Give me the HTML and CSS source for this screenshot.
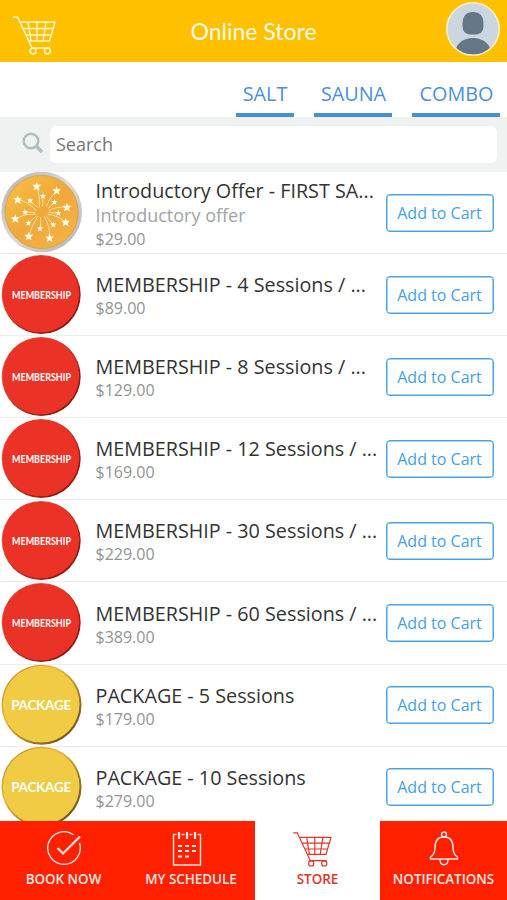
FILE: index.html
```html
<!DOCTYPE html>
<html lang="en">
<head>
<meta charset="utf-8">
<meta name="viewport" content="width=device-width, initial-scale=1">
<title>Online Store</title>
<link rel="stylesheet" href="styles.css">
</head>
<body>
<svg class="defs" width="0" height="0" aria-hidden="true">
  <defs>
    <linearGradient id="redEdge" x1="0" y1="0" x2="1" y2="1"><stop offset=".3" stop-color="#e0503a"/><stop offset=".8" stop-color="#8e1710"/></linearGradient>
    <linearGradient id="goldEdge" x1="0" y1="0" x2="1" y2="1"><stop offset="0" stop-color="#a87c24"/><stop offset=".35" stop-color="#e5b73c"/><stop offset=".85" stop-color="#75571b"/></linearGradient>
    <linearGradient id="orange" x1="0" y1="0" x2="1" y2="1"><stop offset="0" stop-color="#f8c143"/><stop offset=".5" stop-color="#efa83c"/><stop offset="1" stop-color="#f5b640"/></linearGradient>
    <linearGradient id="silver" x1="0" y1="0" x2="1" y2="1"><stop offset="0" stop-color="#b5b2ad"/><stop offset=".5" stop-color="#dedbd6"/><stop offset="1" stop-color="#b2afad"/></linearGradient>
    <path id="star" d="M0-13 3.500-4.500 13-4.500 6 2.500 9 12 0 7-9 12-6 2.500-13-4.500-3.500-4.500Z"/>
    <symbol id="cart" viewBox="0 0 46 40">
      <path d="M1 2H5.500L20 33H38M7.500 7H43L37.500 26H16.500M10.500 13.500H41M13.500 20H39M16 7 19 26M25 7V26M34 7 31 26"/>
      <circle cx="21" cy="36" r="2.900"/><circle cx="35.500" cy="36" r="2.900"/>
    </symbol>
    <symbol id="member" viewBox="0 0 82 82">
      <circle cx="41.200" cy="40.500" r="39.500" fill="url(#redEdge)"/><circle cx="40.900" cy="40" r="38.300" fill="#ea3326"/>
      <text class="seal member-text" x="41.500" y="44.500" textLength="59" lengthAdjust="spacingAndGlyphs">MEMBERSHIP</text>
    </symbol>
    <symbol id="package" viewBox="0 0 82 82">
      <circle cx="41.500" cy="40.800" r="40" fill="url(#goldEdge)"/><circle cx="41.200" cy="40.300" r="38.300" fill="#f1cb43"/>
      <text class="seal package-text" x="41.200" y="45.500" textLength="60">PACKAGE</text>
    </symbol>
  </defs>
</svg>

<div class="app">
  <header class="topbar">
    <svg class="top-cart" aria-hidden="true"><use href="#cart"/></svg>
    <h1>Online Store</h1>
    <svg class="avatar" viewBox="0 0 54 54" aria-hidden="true">
      <clipPath id="face"><circle cx="27" cy="27" r="26"/></clipPath>
      <circle cx="27" cy="27" r="26" fill="#ccd6df"/>
      <g clip-path="url(#face)" fill="#657786"><path d="M27 10C34 10 37.500 14 37.500 22.500S34 32.500 27 32.500 16.500 31 16.500 22.500 20 10 27 10Z"/><ellipse cx="27" cy="49.500" rx="17.500" ry="13.500"/></g>
      <circle cx="27" cy="27" r="26.200" fill="none" stroke="#fff3cf" stroke-width="1.500"/>
    </svg>
  </header>

  <nav class="tabs"><a class="salt">SALT</a><a class="sauna">SAUNA</a><a class="combo">COMBO</a></nav>

  <div class="search">
    <svg class="lens" viewBox="0 0 22 22" aria-hidden="true"><circle cx="9" cy="9" r="7.300"/><path d="M14 14 20 20"/></svg>
    <div class="field">Search</div>
  </div>

  <main class="list">
    <article class="row">
      <svg class="badge" viewBox="0 21 246 246" aria-hidden="true">
        <circle cx="125" cy="141" r="121" fill="url(#silver)"/><circle cx="125" cy="141" r="110" fill="url(#orange)" stroke="#c99a50" stroke-width="2"/>
        <path class="rays" d="M118 127Q119 85 110 64M139 124Q150 96 170 77M146 137Q170 123 201 127M143 148Q174 151 197 172M132 154Q151 184 149 219M114 153Q95 181 86 214M107 147Q75 145 46 161M109 137Q84 109 53 104M114 129 90 107M128 124 129 93M145 131 163 111M146 143 175 144M139 154 160 179M122 157V191M109 153 85 174M105 142H75"/>
        <g fill="#fffbea">
          <use href="#star" x="110" y="64"/><use href="#star" x="170" y="77"/><use href="#star" x="201" y="127"/><use href="#star" x="197" y="172"/><use href="#star" x="149" y="219"/><use href="#star" x="86" y="214"/><use href="#star" x="46" y="161"/><use href="#star" x="53" y="104"/>
          <use href="#star" transform="translate(90 107) scale(.7)"/><use href="#star" transform="translate(129 93) scale(.7)"/><use href="#star" transform="translate(163 111) scale(.7)"/><use href="#star" transform="translate(175 144) scale(.7)"/><use href="#star" transform="translate(160 179) scale(.7)"/><use href="#star" transform="translate(120 191) scale(.7)"/><use href="#star" transform="translate(85 174) scale(.7)"/><use href="#star" transform="translate(75 141) scale(.7)"/>
        </g>
      </svg>
      <div class="info"><h2>Introductory Offer - FIRST SA...</h2><p class="sub">Introductory offer</p><p class="price">$29.00</p></div>
      <button>Add to Cart</button>
    </article>
    <article class="row"><svg class="badge"><use href="#member"/></svg><div class="info"><h2>MEMBERSHIP - 4 Sessions / ...</h2><p class="price">$89.00</p></div><button>Add to Cart</button></article>
    <article class="row"><svg class="badge"><use href="#member"/></svg><div class="info"><h2>MEMBERSHIP - 8 Sessions / ...</h2><p class="price">$129.00</p></div><button>Add to Cart</button></article>
    <article class="row"><svg class="badge"><use href="#member"/></svg><div class="info"><h2>MEMBERSHIP - 12 Sessions / ...</h2><p class="price">$169.00</p></div><button>Add to Cart</button></article>
    <article class="row"><svg class="badge"><use href="#member"/></svg><div class="info"><h2>MEMBERSHIP - 30 Sessions / ...</h2><p class="price">$229.00</p></div><button>Add to Cart</button></article>
    <article class="row"><svg class="badge"><use href="#member"/></svg><div class="info"><h2>MEMBERSHIP - 60 Sessions / ...</h2><p class="price">$389.00</p></div><button>Add to Cart</button></article>
    <article class="row"><svg class="badge"><use href="#package"/></svg><div class="info"><h2>PACKAGE - 5 Sessions</h2><p class="price">$179.00</p></div><button>Add to Cart</button></article>
    <article class="row"><svg class="badge"><use href="#package"/></svg><div class="info"><h2>PACKAGE - 10 Sessions</h2><p class="price">$279.00</p></div><button>Add to Cart</button></article>
  </main>

  <nav class="bottom">
    <a><svg viewBox="0 0 40 36" aria-hidden="true"><path d="M29.500 3.800A16.300 16.300 0 1 0 35.500 12"/><path class="bold" d="M13.500 17 19 22.500 36 5.500"/></svg><span>BOOK NOW</span></a>
    <a><svg class="nav-calendar" viewBox="0 0 40 36" aria-hidden="true"><path d="M9.500 3.500H6.500V34H33.500V3.500H30.500M14.500 3.500H17.500M22.500 3.500H25.500"/><path class="bold" d="M12 1V8M20 1V8M28 1V8"/><path class="dashes" d="M11 15H29M11 20H29M11 25.500H23"/></svg><span>MY SCHEDULE</span></a>
    <a class="active"><svg class="nav-cart" aria-hidden="true"><use href="#cart"/></svg><span>STORE</span></a>
    <a><svg viewBox="0 0 40 36" aria-hidden="true"><circle cx="20" cy="3.500" r="2.500"/><path d="M20 6C13 6 11 11 11 16.500C11 22.500 9 24.500 6.500 26V28H33.500V26C31 24.500 29 22.500 29 16.500C29 11 27 6 20 6ZM16 28.500C16 35.500 24 35.500 24 28.500"/></svg><span>NOTIFICATIONS</span></a>
  </nav>
</div>
</body>
</html>
```

FILE: styles.css
```css
* { box-sizing: border-box; }
body { margin: 0; background: #fff; font-family: "Open Sans", "Noto Sans", sans-serif; }
h1, h2, p { margin: 0; font-weight: 400; }
.defs { position: absolute; }
.app { width: 507px; height: 900px; display: flex; flex-direction: column; overflow: hidden; }
.topbar { height: 61.5px; flex: none; background: #ffc000; display: grid; grid-template-columns: 60px 1fr 60px; align-items: center; }
.top-cart { width: 46px; height: 40px; margin: 9px 0 0 12px; fill: none; stroke: #fff5ca; stroke-width: 1.500; }
h1 { font: 400 23px/30px Lato, sans-serif; color: #fffbe7; text-align: center; padding-top: 1px; }
.avatar { width: 54px; height: 54px; margin: -4px 0 0 -1px; }
.tabs { height: 55.5px; flex: none; display: flex; justify-content: flex-end; align-items: flex-end; gap: 20px; padding-right: 7px; }
.tabs a { height: 39px; border-bottom: 4px solid #478fd9; color: #4a90dd; font-size: 19.800px; line-height: 31px; text-align: center; white-space: nowrap; }
.salt { width: 58px; }
.sauna { width: 78px; padding-left: 1px; }
.combo { width: 88px; padding-left: 1px; }
.search { height: 55px; flex: none; background: #f0f1f1; display: flex; align-items: center; padding: 0 10px 0 22px; }
.lens { width: 22px; height: 22px; margin: -3px 6px 0 0; fill: none; stroke: #aebfc2; stroke-width: 2.500; }
.lens path { stroke-width: 3.500; }
.field { flex: 1; height: 37px; background: #fff; border-radius: 6px; padding-left: 6px; font-size: 18px; line-height: 36px; color: #777; }
.list { flex: 1; min-height: 0; overflow: hidden; }
.row { height: 82.100px; border-bottom: 1px solid #eceeee; display: flex; align-items: center; padding-right: 13.500px; }
.badge { width: 82px; height: 82px; flex: none; }
.rays { fill: none; stroke: #ffe299; stroke-width: 3; }
.seal { fill: #fff; text-anchor: middle; font-family: Lato, sans-serif; font-weight: 700; }
.member-text { font-size: 10.500px; }
.package-text { font-size: 13.500px; }
.info { flex: 1; min-width: 0; padding: 3px 0 0 13.500px; white-space: nowrap; }
.info h2 { font-size: 19.750px; line-height: 25px; color: #333; }
.sub { font-size: 18px; line-height: 25px; color: #a0a3a3; }
.price { font-size: 16px; line-height: 23px; color: #919494; }
button { width: 108px; height: 38px; flex: none; border: 1px solid #48a4e8; border-radius: 4px; background: #fff; color: #459fe2; font: 16px "Open Sans", sans-serif; padding: 0; white-space: nowrap; box-shadow: inset 0 0 0 .5px #48a4e8; }
.bottom { height: 79.500px; flex: none; display: grid; grid-template-columns: 127px 128px 125px 127px; background: #ff2000; color: #ffe8e2; }
.bottom a { display: flex; flex-direction: column; align-items: center; padding-top: 10px; }
.bottom svg { width: 40px; height: 36px; fill: none; stroke: currentColor; stroke-width: 1.400; }
.bottom span { font-size: 13.400px; line-height: 20px; font-weight: 600; margin-top: 2.500px; white-space: nowrap; }
.bottom .bold { stroke-width: 2.200; }
.bottom .dashes { stroke-dasharray: 4 3; stroke-width: 2; }
.bottom .active { background: #fff; color: #df3527; }
.bottom .nav-calendar { margin-right: 8px; }
.bottom .nav-cart { width: 42px; stroke-width: 1.300; margin-right: 9px; }
```
